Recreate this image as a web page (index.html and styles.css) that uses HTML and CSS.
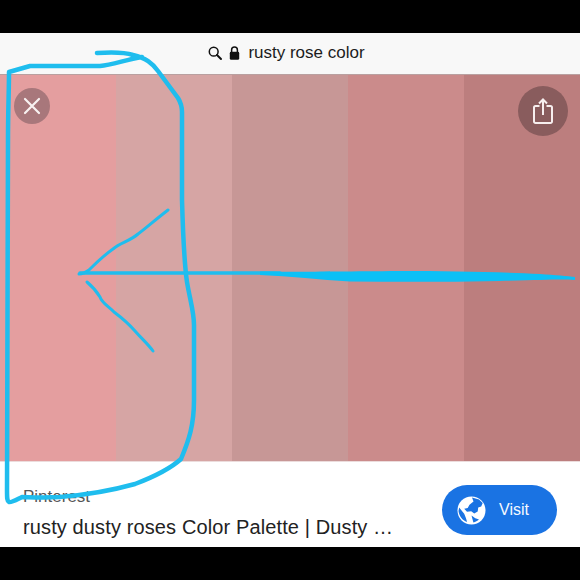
FILE: index.html
```html
<!DOCTYPE html>
<html lang="en">

<head>
  <meta charset="UTF-8">
  <meta name="viewport" content="width=device-width, initial-scale=1.0">
  <link rel="stylesheet" href="styles.css">
  <title>rusty rose color</title>
</head>

<body>

  <div class="page">
    <div class="black-bar top"></div>

    <div class="address-bar">
      <svg class="icon-search" width="14" height="14" viewBox="0 0 14 14">
        <circle cx="5.7" cy="5.7" r="4.4" fill="none" stroke="#111" stroke-width="1.5" />
        <path d="M9 9l4 4" stroke="#111" stroke-width="1.9" stroke-linecap="round" />
      </svg>
      <svg class="icon-lock" width="11" height="14" viewBox="0 0 11 14">
        <path d="M2.6 6V3.9a2.9 2.9 0 0 1 5.8 0V6" fill="none" stroke="#111" stroke-width="1.5" />
        <rect x="0.8" y="5.8" width="9.4" height="8" rx="1.4" fill="#111" />
      </svg>
      <span class="address-text">rusty rose color</span>
    </div>

    <div class="palette">
      <div class="swatch s1"></div>
      <div class="swatch s2"></div>
      <div class="swatch s3"></div>
      <div class="swatch s4"></div>
      <div class="swatch s5"></div>

      <div class="round-btn close-btn">
        <svg width="18" height="18" viewBox="0 0 18 18">
          <path d="M2 2l14 14M16 2L2 16" stroke="#f8f1f1" stroke-width="2.2" stroke-linecap="round" />
        </svg>
      </div>

      <div class="round-btn share-btn">
        <svg width="20" height="26" viewBox="0 0 20 26">
          <path d="M6.500 8H2.500A1.500 1.500 0 0 0 1 9.500v14A1.500 1.500 0 0 0 2.500 25h15a1.500 1.500 0 0 0 1.500-1.500v-14A1.500 1.500 0 0 0 17.500 8h-4" fill="none" stroke="#f6eeee" stroke-width="2" />
          <path d="M10 17V2M6 5.500L10 1.500l4 4" fill="none" stroke="#f6eeee" stroke-width="2" />
        </svg>
      </div>
    </div>

    <div class="result">
      <div class="result-text">
        <div class="source">Pinterest</div>
        <div class="title">rusty dusty roses Color Palette | Dusty …</div>
      </div>
      <div class="visit-btn">
        <svg width="29" height="29" viewBox="0 0 29 29">
          <circle cx="14.500" cy="14.500" r="14" fill="#fff" />
          <path d="M15 1.500l1.500 4-4 3.200-1.800 3.300-3.500.8 2.800 3 4.200-.5 3 2.200 3.500-2 .5-4 3-1 1.500-3.500L22 3.500z" fill="#1a73e3" />
          <path d="M2.200 11.500c1.800 2.500 3.500 4.500 5 6.200 1.300 2.800 2.300 5.800 2.800 8.300-4.500-1.500-8-6-8.500-11z" fill="#1a73e3" />
          <path d="M14.500 19.500l3.800 2.800 3.700 1.200c-1.600 1.400-3.500 2.500-5.600 3z" fill="#1a73e3" />
        </svg>
        <span>Visit</span>
      </div>
    </div>

    <div class="black-bar bottom"></div>

    <!-- hand drawn marker on top of the screenshot -->
    <svg class="scribble" width="580" height="580" viewBox="0 0 580 580">
      <g fill="none" stroke="#1fbdee" stroke-linecap="round" stroke-linejoin="round">
        <path stroke-width="4.500" d="M97 53C112 52 124 52 133 55C146 58 152 63 158 71L178 98C181 103 182 107 182 112L182 200C183 235 184 262 187 282C190 300 194 312 194 325L194 400C194 425 189 440 181 459C170 469 156 476 135 484C110 491 85 495 60 497C40 498 28 497 22 497C16 500 11 503 9 502C7 501 7 498 7 490L8 140C8 110 9 90 9 72L30 66L100 66C112 65 125 60 142 57" />
        <path stroke-width="3" d="M168 210C155 220 145 229 138 234C130 241 120 243 113 249C103 256 96 263 89 270C85 273 82 274 79 274" />
        <path stroke-width="3" d="M87 282C93 287 97 292 100 297C102 303 108 306 114 312C122 318 128 323 135 331C142 339 148 344 153 351" />
        <path stroke-width="3.500" d="M80 273L280 273" />
      </g>
      <path d="M260 271.500C300 272 330 271.500 400 271C450 271 500 272 540 274C555 275 568 276 575 277L575 280C560 279 545 280 500 281C450 282 400 282 350 281.500C320 280 290 276 260 275Z" fill="#0cc0f6" />
    </svg>
  </div>

</body>

</html>
```

FILE: styles.css
```css
body {
  margin: 0;
  font-family: "Liberation Sans", Arial, sans-serif;
}

.page {
  position: relative;
  width: 580px;
  height: 580px;
  display: flex;
  flex-direction: column;
  overflow: hidden;
  background-color: #ffffff;
}

.black-bar {
  background-color: #000000;
}

.black-bar.top {
  height: 33px;
}

.black-bar.bottom {
  height: 33px;
}

.address-bar {
  height: 39px;
  padding: 0 7px 2px 0;
  display: flex;
  align-items: center;
  justify-content: center;
  gap: 7px;
  background-color: #f8f8f8;
  border-bottom: 1px solid #b9a0a0;
  color: #1c1c1c;
  font-size: 17px;
}

.icon-lock {
  margin-right: 1px;
}

.palette {
  position: relative;
  height: 386px;
  display: flex;
  border-bottom: 1px solid #ecdcdc;
}

.swatch {
  flex: 1;
}

.s1 {
  background-color: #e49e9f;
}

.s2 {
  background-color: #d6a5a4;
}

.s3 {
  background-color: #c79796;
}

.s4 {
  background-color: #cb8b8b;
}

.s5 {
  background-color: #bc7e7e;
}

.round-btn {
  position: absolute;
  display: flex;
  align-items: center;
  justify-content: center;
  border-radius: 50%;
}

.close-btn {
  left: 14px;
  top: 13px;
  width: 36px;
  height: 36px;
  background-color: #a8777b;
}

.share-btn {
  left: 518px;
  top: 11px;
  width: 50px;
  height: 50px;
  background-color: #895c5d;
}

.result {
  flex: 1;
  display: flex;
  justify-content: space-between;
  padding: 23px 23px 0 23px;
}

.source {
  font-size: 17px;
  color: #555555;
  margin-top: 2px;
}

.title {
  font-size: 20px;
  letter-spacing: 0.12px;
  color: #222222;
  margin-top: 9px;
}

.visit-btn {
  width: 115px;
  height: 50px;
  box-sizing: border-box;
  padding-left: 15px;
  display: flex;
  align-items: center;
  gap: 13px;
  border-radius: 25px;
  background-color: #1a73e3;
  color: #f4f8ff;
  font-size: 16px;
}

.scribble {
  position: absolute;
  left: 0;
  top: 0;
}
```
